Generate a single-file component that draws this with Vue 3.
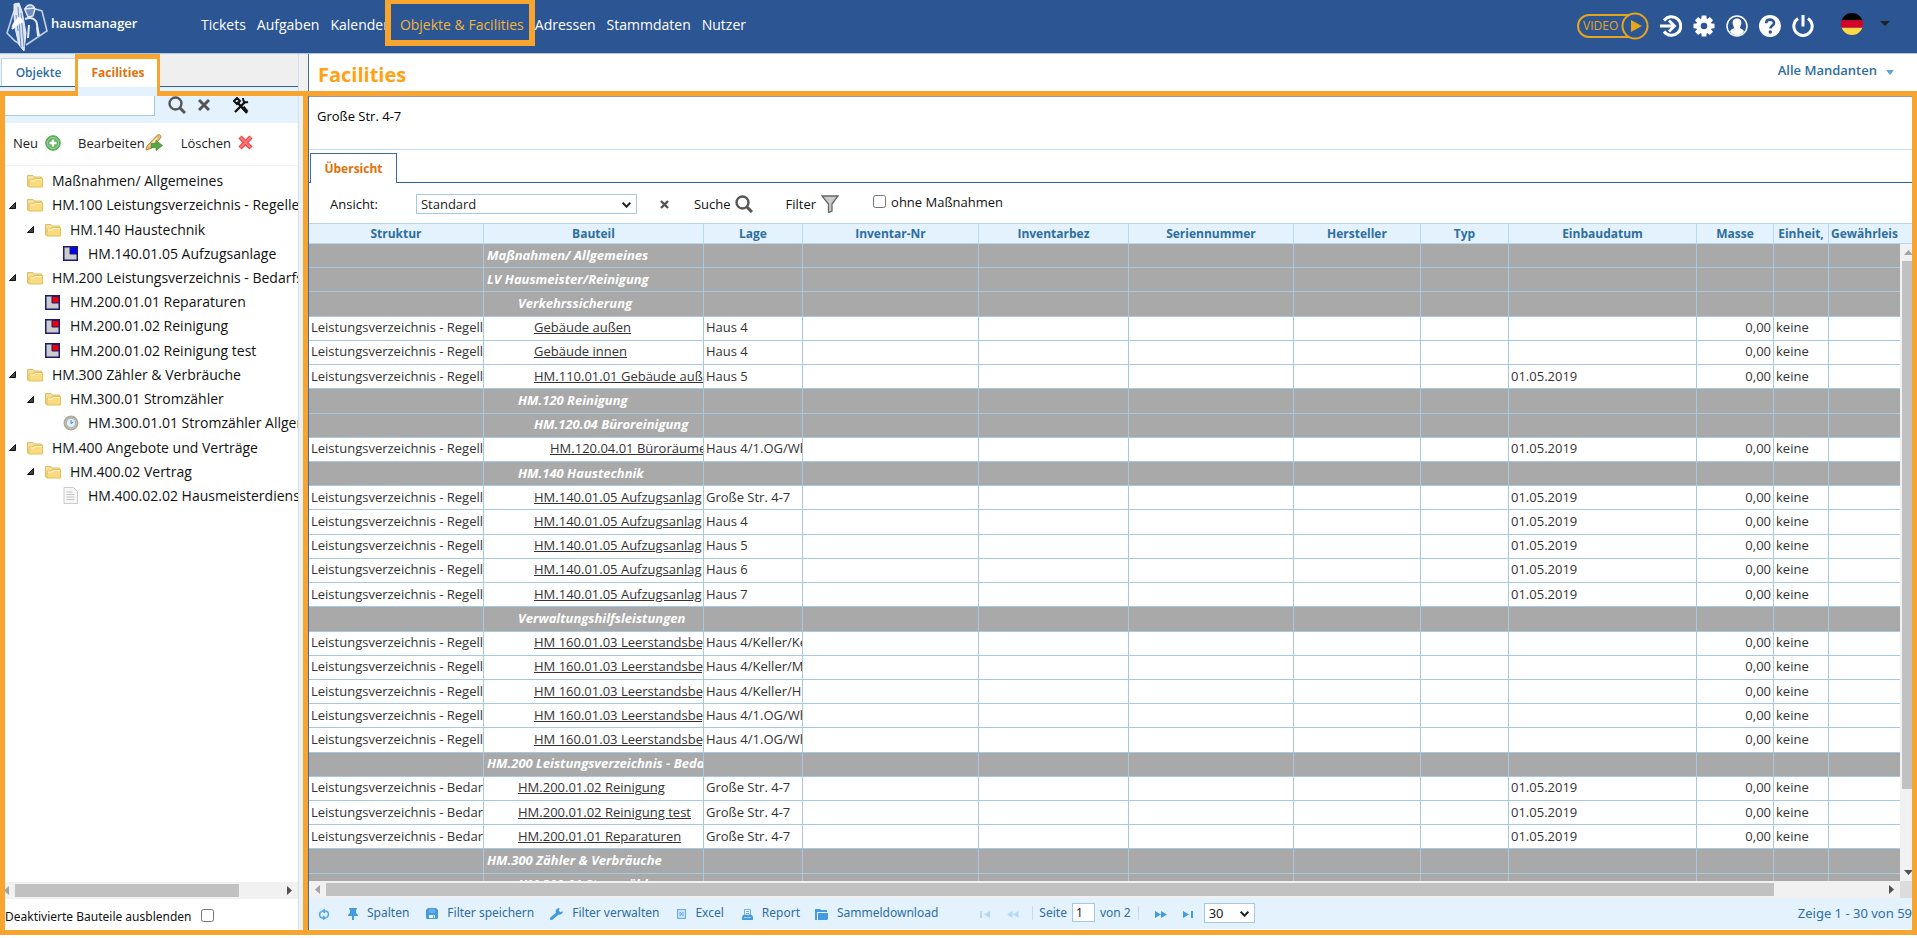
<script setup>
import { ref } from 'vue'

const nav = ['Tickets', 'Aufgaben', 'Kalender', 'Objekte & Facilities', 'Adressen', 'Stammdaten', 'Nutzer']
const active = 'Objekte & Facilities'

const tree = [
  { level: 0, icon: 'folder', label: 'Maßnahmen/ Allgemeines' },
  { level: 0, icon: 'folder', open: true, label: 'HM.100 Leistungsverzeichnis - Regelle' },
  { level: 1, icon: 'folder', open: true, label: 'HM.140 Haustechnik' },
  { level: 2, icon: 'blue', label: 'HM.140.01.05 Aufzugsanlage' },
  { level: 0, icon: 'folder', open: true, label: 'HM.200 Leistungsverzeichnis - Bedarfs' },
  { level: 1, icon: 'red', label: 'HM.200.01.01 Reparaturen' },
  { level: 1, icon: 'red', label: 'HM.200.01.02 Reinigung' },
  { level: 1, icon: 'red', label: 'HM.200.01.02 Reinigung test' },
  { level: 0, icon: 'folder', open: true, label: 'HM.300 Zähler & Verbräuche' },
  { level: 1, icon: 'folder', open: true, label: 'HM.300.01 Stromzähler' },
  { level: 2, icon: 'clock', label: 'HM.300.01.01 Stromzähler Allger' },
  { level: 0, icon: 'folder', open: true, label: 'HM.400 Angebote und Verträge' },
  { level: 1, icon: 'folder', open: true, label: 'HM.400.02 Vertrag' },
  { level: 2, icon: 'doc', label: 'HM.400.02.02 Hausmeisterdienst' },
]

const columns = ['Struktur', 'Bauteil', 'Lage', 'Inventar-Nr', 'Inventarbez', 'Seriennummer', 'Hersteller', 'Typ', 'Einbaudatum', 'Masse', 'Einheit,', 'Gewährleis']

const R = 'Leistungsverzeichnis - Regelle'
const B = 'Leistungsverzeichnis - Bedarf'
const D = '01.05.2019'
const group = (level, name) => ({ group: true, level, name })
const item = (s, level, name, place, date = '') => ({ s, level, name, place, date })

const rows = [
  group(0, 'Maßnahmen/ Allgemeines'),
  group(0, 'LV Hausmeister/Reinigung'),
  group(2, 'Verkehrssicherung'),
  item(R, 3, 'Gebäude außen', 'Haus 4'),
  item(R, 3, 'Gebäude innen', 'Haus 4'),
  item(R, 3, 'HM.110.01.01 Gebäude auße', 'Haus 5', D),
  group(2, 'HM.120 Reinigung'),
  group(3, 'HM.120.04 Büroreinigung'),
  item(R, 4, 'HM.120.04.01 Büroräume', 'Haus 4/1.OG/Wh', D),
  group(2, 'HM.140 Haustechnik'),
  item(R, 3, 'HM.140.01.05 Aufzugsanlag', 'Große Str. 4-7', D),
  item(R, 3, 'HM.140.01.05 Aufzugsanlag', 'Haus 4', D),
  item(R, 3, 'HM.140.01.05 Aufzugsanlag', 'Haus 5', D),
  item(R, 3, 'HM.140.01.05 Aufzugsanlag', 'Haus 6', D),
  item(R, 3, 'HM.140.01.05 Aufzugsanlag', 'Haus 7', D),
  group(2, 'Verwaltungshilfsleistungen'),
  item(R, 3, 'HM 160.01.03 Leerstandsbeg', 'Haus 4/Keller/Ke'),
  item(R, 3, 'HM 160.01.03 Leerstandsbeg', 'Haus 4/Keller/M'),
  item(R, 3, 'HM 160.01.03 Leerstandsbeg', 'Haus 4/Keller/H'),
  item(R, 3, 'HM 160.01.03 Leerstandsbeg', 'Haus 4/1.OG/Wh'),
  item(R, 3, 'HM 160.01.03 Leerstandsbeg', 'Haus 4/1.OG/Wh'),
  group(0, 'HM.200 Leistungsverzeichnis - Beda'),
  item(B, 2, 'HM.200.01.02 Reinigung', 'Große Str. 4-7', D),
  item(B, 2, 'HM.200.01.02 Reinigung test', 'Große Str. 4-7', D),
  item(B, 2, 'HM.200.01.01 Reparaturen', 'Große Str. 4-7', D),
  group(0, 'HM.300 Zähler & Verbräuche'),
  group(2, 'HM.300.01 Stromzähler'),
]

const search = ref('')
const page = ref('1')
const size = ref('30')
const view = ref('Standard')
</script>

<template>
  <div class="app">
    <header class="top">
      <a class="brand" href="#" aria-label="hausmanager">
        <svg width="48" height="52" viewBox="0 0 48 52" fill="none" stroke="#e6edf7">
          <path d="M14 10 7 32l8 8 5 3M32 7l10 3 5 20-21 14" stroke-width="1.600" opacity=".8" />
          <path d="M14 3l5-1 3 8 4 22-2 18-5-6-4-17-1-13z" fill="#dbe5f3" stroke-width="1" />
          <path d="M18 6l3 40M21 12l3 34M16 14l2 16" stroke="#6f8fc0" stroke-width="1" />
          <path d="M12 28c0-5 4-11 8-12l4 5c-3 0-8 4-11 7z" fill="#fff" />
          <path d="M25 9c1-6 8-7 10-1l-2 7-5 1zM24 8l11-1" stroke-width="1.400" fill="#6f8fc0" />
          <path d="M25 18c7-3 12 1 12 6l2 11M29 24l-1 13M37 26l1 9" stroke-width="2" />
        </svg>
        <span>hausmanager</span>
      </a>
      <nav>
        <a v-for="n in nav" :key="n" href="#" :class="{ on: n === active }">{{ n }}</a>
      </nav>
      <div class="tools">
        <button class="video" aria-label="Video">
          <svg width="72" height="28" viewBox="0 0 72 28" fill="none" stroke="#e8a41c" stroke-width="2">
            <path d="M52 3H12a10.500 10.500 0 0 0 0 22h40" />
            <circle cx="58" cy="14" r="12.500" fill="#2b5593" />
            <path d="M54 8v12l11-6z" fill="#e8a41c" stroke="none" />
          </svg>
          <span>VIDEO</span>
        </button>
        <button aria-label="Anmelden">
          <svg width="22" height="22" viewBox="0 0 22 22" fill="none" stroke="#fff" stroke-width="3">
            <path d="M4 5.500A9.300 9.300 0 1 1 4 16.500" /><path d="M0 11h13M9 5.500l5.500 5.500L9 16.500" stroke-width="2.800" />
          </svg>
        </button>
        <button aria-label="Einstellungen">
          <svg width="22" height="22" viewBox="0 0 22 22">
            <g fill="#fff"><circle cx="11" cy="11" r="7.800" />
              <path v-for="a in 8" :key="a" d="M8.700 0.500h4.600l.5 5H8.200z" :transform="`rotate(${a * 45} 11 11)`" /></g>
            <circle cx="11" cy="11" r="3.300" fill="#2b5593" />
          </svg>
        </button>
        <button aria-label="Profil">
          <svg width="22" height="22" viewBox="0 0 22 22">
            <circle cx="11" cy="11" r="10" fill="#2b5593" stroke="#fff" stroke-width="1.500" />
            <path d="M11 3.500c3.500 0 4.700 2.500 4.300 5.200-.3 2-1.300 2.800-1.400 4.300 1.300 1 3.600 1.200 4 3.600A9.500 9.500 0 0 1 11 20.500a9.500 9.500 0 0 1-6.900-3.900c.4-2.400 2.700-2.600 4-3.600-.1-1.500-1.100-2.300-1.400-4.300C6.300 6 7.500 3.500 11 3.500z" fill="#fff" />
          </svg>
        </button>
        <button aria-label="Hilfe">
          <svg width="22" height="22" viewBox="0 0 22 22" fill="none">
            <circle cx="11" cy="11" r="11" fill="#fff" />
            <path d="M7.200 8.300c0-5 7.800-4.700 7.800-.4 0 2.700-3.600 3-3.600 5.600" stroke="#2b5593" stroke-width="2.600" />
            <circle cx="11.300" cy="17" r="1.700" fill="#2b5593" />
          </svg>
        </button>
        <button aria-label="Abmelden">
          <svg width="22" height="22" viewBox="0 0 22 22" fill="none" stroke="#fff" stroke-width="3">
            <path d="M6 3.500a9.200 9.200 0 1 0 10 0M11 0v11.500" />
          </svg>
        </button>
        <button class="lang" aria-label="Deutsch">
          <svg width="22" height="22" viewBox="0 0 22 22">
            <clipPath id="flag"><circle cx="11" cy="11" r="11" /></clipPath>
            <g clip-path="url(#flag)"><path d="M0 0h22v7.300H0z" fill="#000" /><path d="M0 7.300h22v7.500H0z" fill="#d80027" /><path d="M0 14.800h22V22H0z" fill="#ffda44" /></g>
          </svg>
          <svg class="caret" width="10" height="5" viewBox="0 0 10 5"><path d="M0 0h10L5 5z" fill="#222" /></svg>
        </button>
      </div>
    </header>

    <div class="work">
      <aside class="side">
        <div class="tabs">
          <button class="tab">Objekte</button>
          <button class="tab current">Facilities</button>
        </div>
        <div class="searchbar">
          <input v-model="search" type="text" aria-label="Suche">
          <button class="find" aria-label="Suchen">
            <svg width="18" height="18" viewBox="0 0 18 18" fill="none" stroke="#555"><circle cx="7.500" cy="7.500" r="6" stroke-width="2.400" /><path d="M12 12l5 5" stroke-width="3" /></svg>
          </button>
          <button class="clear" aria-label="Leeren">
            <svg width="12" height="12" viewBox="0 0 12 12" stroke="#555" stroke-width="3"><path d="M1 1l10 10M11 1L1 11" /></svg>
          </button>
          <button class="config" aria-label="Werkzeuge">
            <svg width="16" height="17" viewBox="0 0 16 17" fill="none" stroke="#111"><path d="M4 5l10 11M12 5L2 15" stroke-width="2.400" /><path d="M1 4l3-3 3 3-3 3zM10 1c0 4 2 5 5 4" stroke-width="2" /><path d="M10 10l4 5" stroke-width="3.500" /></svg>
          </button>
        </div>
        <div class="actions">
          <button>Neu
            <svg width="16" height="16" viewBox="0 0 16 16"><circle cx="8" cy="8" r="7.300" fill="#63b463" stroke="#58a058" /><circle cx="8" cy="8" r="5.600" fill="none" stroke="#9bd69a" /><path d="M8 4.500v7M4.500 8h7" stroke="#fff" stroke-width="2.400" /></svg>
          </button>
          <button class="edit">Bearbeiten<svg width="18" height="17" viewBox="0 0 18 17"><path d="M2 12L12 1.500c2-2 5 0 3.500 2.500L7 14l-6 2z" fill="#e9bd6c" stroke="#bd8432" /><path d="M12 4l-7 8" stroke="#fff2d0" stroke-width="1.500" /><path d="M6 9.500h5V6.500l6.500 5-6.500 5v-3H6z" fill="#57a845" stroke="#3f8b36" stroke-width=".7" /></svg>
          </button>
          <button class="delete">Löschen
            <svg width="15" height="15" viewBox="0 0 15 15"><path d="M2 2l11 11M13 2L2 13" stroke="#e44" stroke-width="4.500" /><path d="M2.500 2.500l10 10M12.500 2.500l-10 10" stroke="#f77" stroke-width="2" /></svg>
          </button>
        </div>
        <ul class="tree">
          <li v-for="(t, i) in tree" :key="i" :class="'l' + t.level">
            <span class="twist"><svg v-if="t.open" width="7" height="7" viewBox="0 0 7 7"><path d="M6.500.5v6h-6z" fill="#444" stroke="#111" /></svg></span>
            <span class="ico">
              <svg v-if="t.icon === 'folder'" width="16" height="14" viewBox="0 0 16 14"><path d="M.5 12V1.500h5.500L7.500 3h7v9.500H1z" fill="#f5dd9b" stroke="#dfbd65" /><path d="M2 6h4l1-1.500h8.500V13H2z" fill="#f8dc80" stroke="#e6bf56" /><path d="M3 7h4l1-1.500h6.500" stroke="#fff4cc" fill="none" /></svg>
              <svg v-else-if="t.icon === 'blue' || t.icon === 'red'" width="15" height="15" viewBox="0 0 15 15"><path d="M.75.75h13.500v13.500H.75z" fill="#ccc" stroke="#1b1b70" stroke-width="1.500" /><path d="M7 1.500h7V8H7z" :fill="t.icon === 'blue' ? '#0000f0' : '#f00000'" stroke="#1b1b70" /></svg>
              <svg v-else-if="t.icon === 'clock'" width="16" height="16" viewBox="0 0 16 16"><circle cx="8" cy="8" r="6.500" fill="#e6eff8" stroke="#bba78b" stroke-width="2" /><circle cx="8" cy="8" r="4.800" fill="none" stroke="#93b4d9" stroke-width="1.200" /><path d="M8 5v3.500l2.500-1.500" fill="none" stroke="#56789d" /></svg>
              <svg v-else width="15" height="17" viewBox="0 0 15 17"><path d="M1 .5h9.500l4 4v12H1z" fill="#f6f6f6" stroke="#ccc" /><path d="M3.500 5h6M3.500 7.500h8M3.500 10h8M3.500 12.500h8" stroke="#c4c4c4" /></svg>
            </span>
            <span>{{ t.label }}</span>
          </li>
        </ul>
        <div class="hbar"><i class="arr lt" /><i class="thumb" /><i class="arr rt" /></div>
        <label class="hide">Deaktivierte Bauteile ausblenden <input type="checkbox"></label>
      </aside>

      <main>
        <div class="titlebar">
          <h1>Facilities</h1>
          <button>Alle Mandanten <svg width="8" height="5" viewBox="0 0 8 5"><path d="M0 0h8L4 5z" fill="#5fa4d3" /></svg></button>
        </div>
        <div class="address">Große Str. 4-7</div>
        <div class="subtabs"><button>Übersicht</button></div>
        <div class="toolbar">
          <label for="view">Ansicht:</label>
          <div class="pick">
            <select id="view" v-model="view"><option>Standard</option></select>
            <svg width="9" height="6" viewBox="0 0 9 6" fill="none" stroke="#222" stroke-width="2"><path d="M.7.7l3.800 4L8.300.7" /></svg>
          </div>
          <button class="x" aria-label="Ansicht löschen"><svg width="9" height="9" viewBox="0 0 9 9" stroke="#555" stroke-width="2.400"><path d="M1 1l7 7M8 1L1 8" /></svg></button>
          <button class="q">Suche <svg width="18" height="18" viewBox="0 0 18 18" fill="none" stroke="#555"><circle cx="7.500" cy="7.500" r="6" stroke-width="2.400" /><path d="M12 12l5 5" stroke-width="3" /></svg></button>
          <button class="f">Filter <svg width="18" height="18" viewBox="0 0 18 18"><path d="M1 1h16l-6 8v7l-3.500 1.500V9z" fill="#ccc" stroke="#666" stroke-width="1.300" /></svg></button>
          <label class="ohne"><input type="checkbox"> ohne Maßnahmen</label>
        </div>
        <div class="grid">
          <div class="clip">
            <table>
              <colgroup><col v-for="(c, i) in columns" :key="c" :class="'c' + i"></colgroup>
              <thead><tr><th v-for="c in columns" :key="c" scope="col">{{ c }}</th></tr></thead>
              <tbody>
                <tr v-for="(r, i) in rows" :key="i" :class="{ group: r.group }">
                  <td>{{ r.s }}</td>
                  <td :class="'n' + r.level"><template v-if="r.group">{{ r.name }}</template><a v-else href="#">{{ r.name }}</a></td>
                  <td>{{ r.place }}</td>
                  <td /><td /><td /><td /><td />
                  <td>{{ r.date }}</td>
                  <td class="num">{{ r.group ? '' : '0,00' }}</td>
                  <td>{{ r.group ? '' : 'keine' }}</td>
                  <td />
                </tr>
              </tbody>
            </table>
          </div>
          <div class="vbar"><div class="cap" /><i class="arr up" /><i class="thumb" /><i class="arr dn" /></div>
          <div class="hbar"><i class="arr lt" /><i class="thumb" /><i class="arr rt" /></div>
          <div class="corner" />
        </div>
        <footer>
          <button aria-label="Aktualisieren"><svg width="12" height="13" viewBox="0 0 12 13" fill="none" stroke="#5aa7e2" stroke-width="1.500"><path d="M7 1.500L4.500 3 7 5M5 3h2c4 0 4.500 5 1.500 6.500M5 11.500L7.500 10 5 8M7 10H5C1 10 .5 5 3.500 3.500" /></svg></button>
          <button class="b1"><svg width="10" height="12" viewBox="0 0 10 12" fill="#459be0"><path d="M1 0h8v1L8 2v3l2 2v1H0V7l2-2V2L1 1zM4 8h2v4H4z" /></svg>Spalten</button>
          <button class="b2"><svg width="12" height="12" viewBox="0 0 12 12"><path d="M2 0h8l2 2v8l-1 1H1l-1-1V2z" fill="#459be0" /><path d="M3 2h6M3 4h6" stroke="#8cc3ef" /><path d="M3 7h6v3H3z" fill="#e4f2fe" /><path d="M7 7.500h1V10H7z" fill="#459be0" /></svg>Filter speichern</button>
          <button class="b3"><svg width="13" height="12" viewBox="0 0 13 12"><path d="M1.500 10.500L7.500 5.500" stroke="#459be0" stroke-width="3" stroke-linecap="round" /><path d="M9.500 0C6.500 0 5 2.500 6 5c1 2.500 6 2.500 7-1.500l-3 .5-1-1.500z" fill="#459be0" /></svg>Filter verwalten</button>
          <button class="b4"><svg width="9" height="10" viewBox="0 0 9 10" fill="none" stroke="#6ab0e8"><path d="M.5.5h8v9h-8z" stroke-width="1.500" /><path d="M3 2.500v5M6 2.500v5M3 3l3 4M6 3L3 7" /></svg>Excel</button>
          <button class="b5"><svg width="11" height="11" viewBox="0 0 11 11"><path d="M2.500.5h6V6h-6z" fill="#fff" stroke="#6ab0e8" /><path d="M4 2.500h3M4 4.500h3" stroke="#6ab0e8" /><path d="M1 6h9l1 2v3H0V8z" fill="#459be0" /><path d="M2 8.500h7" stroke="#9fd0f5" /></svg>Report</button>
          <button class="b6"><svg width="13" height="12" viewBox="0 0 13 12" fill="#459be0"><path d="M0 12V1h5l1 1h6v2H2v8z" /><path d="M3 5h10v6l-1 1H3z" /></svg>Sammeldownload</button>
          <button class="b7" aria-label="Erste Seite"><svg width="11" height="7" viewBox="0 0 11 7" fill="#b4d8f4"><path d="M0 0h2v7H0zM10 0v7L4 3.500z" /></svg></button>
          <button class="b8" aria-label="Vorige Seite"><svg width="12" height="7" viewBox="0 0 12 7" fill="#b4d8f4"><path d="M5.500 0v7L0 3.500zM11.500 0v7L6 3.500z" /></svg></button>
          <label class="pg">Seite <input v-model="page" type="text"> von 2</label>
          <button class="b9" aria-label="Nächste Seite"><svg width="12" height="7" viewBox="0 0 12 7" fill="#459be0"><path d="M0 0v7l6-3.500zM6 0v7l6-3.500z" /></svg></button>
          <button class="b8" aria-label="Letzte Seite"><svg width="11" height="7" viewBox="0 0 11 7" fill="#459be0"><path d="M0 0v7l6-3.500zM8 0h2v7H8z" /></svg></button>
          <div class="pick small">
            <select v-model="size" aria-label="Zeilen pro Seite"><option>30</option></select>
            <svg width="9" height="6" viewBox="0 0 9 6" fill="none" stroke="#222" stroke-width="2"><path d="M.7.7l3.800 4L8.300.7" /></svg>
          </div>
          <span class="count">Zeige 1 - 30 von 59</span>
        </footer>
      </main>
      <div class="frame" />
      <div class="frame-tab" />
    </div>
  </div>
</template>

<style>
body { margin: 0; }
</style>

<style scoped>
.app { height: 100vh; display: flex; flex-direction: column; overflow: hidden; background: #fff; color: #333; font: 13px/16px "Open Sans", "Noto Sans", sans-serif; }
.app * { box-sizing: border-box; }
button, input, select { font: inherit; color: inherit; }
button { background: none; border: 0; padding: 0; display: flex; align-items: center; white-space: nowrap; }
svg { display: block; flex: none; }
a { color: inherit; text-decoration: none; }
input[type=checkbox] { width: 13px; height: 13px; margin: 0; }

.top { height: 54px; flex: none; background: #2b5593; border-bottom: 1px solid #a9c8e6; display: flex; color: #fff; }
.brand { display: flex; width: 201px; flex: none; font-size: 13px; font-weight: 600; }
.brand svg { margin-top: 1px; }
.brand span { margin: 14px 0 0 3px; line-height: 18px; }
nav { display: flex; gap: 11px; height: 53px; font-size: 14px; }
nav a { position: relative; line-height: 50px; white-space: nowrap; }
nav a.on { color: #f0b440; }
nav a.on::after { content: ""; position: absolute; inset: 0 -11px 7px -15px; border: 6px solid #f8a52f; border-top-width: 4px; }
.tools { margin-left: auto; padding: 0 27px 2px 0; display: flex; align-items: center; gap: 11px; }
.video { position: relative; }
.video span { position: absolute; left: 6px; font-size: 12px; color: #e8a41c; }
.lang { margin-left: 16px; gap: 17px; }
.lang svg { margin-bottom: 4px; }

.work { flex: 1; min-height: 0; display: flex; position: relative; padding-bottom: 8px; }
.side { width: 308px; flex: none; display: flex; flex-direction: column; padding-right: 10px; background: linear-gradient(90deg, transparent 298px, #cfe0f0 298px, #cfe0f0 299px, #f1f1f1 299px); }
.tabs { height: 33px; flex: none; background: #efefef; border-bottom: 1px solid #2f5f9e; display: flex; align-items: end; padding-left: 1px; }
.tab { height: 28px; width: 75px; justify-content: center; background: #fff; border: 1px solid #b9d7ee; border-bottom: 0; color: #2e6e9e; font-size: 12px; font-weight: 600; }
.tab.current { width: 84px; height: 32px; padding-top: 3px; color: #e17009; border: 0; margin-bottom: -1px; font-weight: 700; }
.searchbar { height: 36px; flex: none; background: #e4f2fe; display: flex; align-items: center; padding-left: 4px; }
.searchbar input { width: 151px; height: 21px; border: 1px solid #a6c9e2; background: #fff; }
.find { margin-left: 13px; } .clear { margin-left: 12px; } .config { margin-left: 23px; }
.actions { height: 43px; flex: none; display: flex; align-items: center; padding: 0 0 3px 13px; border-bottom: 1px solid #f2f5f8; color: #222; }
.actions button { gap: 7px; }
.actions .edit { margin-left: 17px; gap: 0; } .actions .delete { margin-left: 18px; }
.tree { list-style: none; margin: 3px 0 0; padding: 0; height: 339px; display: flex; flex-direction: column; overflow: hidden; font-size: 14px; color: #111; }
.tree li { flex: 1; display: flex; align-items: center; white-space: nowrap; padding-left: 9px; }
.tree li.l1 { padding-left: 27px; } .tree li.l2 { padding-left: 45px; }
.twist { width: 18px; flex: none; } .ico { width: 25px; flex: none; }
.side .hbar { margin-top: auto; margin-left: 4px; }
.side .hbar .thumb { width: 224px; }
.hide { height: 31px; flex: none; display: flex; align-items: center; gap: 10px; padding: 4px 0 0 5px; white-space: nowrap; font: 12px/16px "Noto Sans", sans-serif; color: #111; }
.hide input { margin-bottom: 2px; }

.hbar { height: 17px; flex: none; display: flex; align-items: center; background: #f1f1f1; overflow: hidden; }
.thumb { display: block; background: #c1c1c1; }
.hbar .thumb { height: 13px; }
.arr { display: block; flex: none; width: 17px; height: 17px; position: relative; }
.arr::after { content: ""; position: absolute; inset: 4px 6px; background: #505050; }
.lt::after { clip-path: polygon(0 50%, 100% 0, 100% 100%); background: #a3a3a3; }
.rt { margin-left: auto; }
.rt::after { clip-path: polygon(0 0, 100% 50%, 0 100%); }
.side .lt { width: 11px; } .side .lt::after { inset: 4px 6px 4px 0; }

main { flex: 1; min-width: 0; display: flex; flex-direction: column; border-left: 1px solid #3f6aa5; padding-right: 5px; }
.titlebar { height: 42px; flex: none; display: flex; justify-content: space-between; padding: 0 18px 4px 9px; }
h1 { margin: 0; font-size: 20px; line-height: 42px; font-weight: 700; color: #ffa211; }
.titlebar button { font-weight: 600; color: #2e6e9e; gap: 9px; padding-bottom: 6px; }
.titlebar svg { margin-top: 4px; }
.address { height: 54px; flex: none; border-top: 1px solid #999; border-bottom: 1px solid #c5dcee; padding: 11px 8px; color: #000; }
.subtabs { height: 33px; flex: none; border-bottom: 1px solid #2f5f9e; display: flex; align-items: end; padding-left: 1px; }
.subtabs button { width: 87px; height: 30px; justify-content: center; border: 1px solid #3f6aa5; border-bottom: 0; margin-bottom: -1px; background: #fff; color: #e17009; font-size: 12px; font-weight: 700; }
.toolbar { height: 40px; flex: none; display: flex; align-items: center; padding: 2px 0 0 21px; color: #111; }
.pick { position: relative; margin-left: 38px; width: 221px; }
.pick select { width: 100%; height: 20px; padding: 0 4px; border: 1px solid #a6c9e2; background: #fff; appearance: none; border-radius: 0; color: #222; }
.pick svg { position: absolute; right: 6px; top: 8px; pointer-events: none; }
.x { margin-left: 23px; } .q { margin-left: 25px; gap: 4px; } .f { margin-left: 33px; gap: 5px; }
.ohne { display: flex; align-items: center; gap: 5px; margin: 0 0 5px 34px; white-space: nowrap; }

.grid { flex: 1; min-height: 0; display: grid; grid-template: minmax(0, 1fr) 17px / minmax(0, 1fr) 12px; }
.clip { overflow: hidden; border-top: 1px solid #b9d7ee; }
table { width: 100%; height: 674px; table-layout: fixed; border-collapse: separate; border-spacing: 0; }
th { height: 20px; padding: 0; background: #e4f2fe; color: #2e6e9e; font-size: 12px; font-weight: 700; line-height: 14px; border-right: 1px solid #b9d7ee; border-bottom: 1px solid #b9d7ee; white-space: nowrap; overflow: hidden; }
td { height: 24px; padding: 0 2px 2px; line-height: 16px; border-right: 1px solid #a6c9e2; border-bottom: 1px solid #a6c9e2; white-space: nowrap; overflow: hidden; }
th:last-child, td:last-child { border-right: 0; }
td a { text-decoration: underline; }
.num { text-align: right; }
.group td { background: #a9a9a9; color: #fff; font-weight: 700; font-style: italic; }
td.n0 { padding-left: 3px; } td.n2 { padding-left: 34px; } td.n3 { padding-left: 50px; } td.n4 { padding-left: 66px; }
.c0 { width: 175px; } .c1 { width: 220px; } .c2 { width: 99px; } .c3 { width: 176px; } .c4 { width: 150px; } .c5 { width: 165px; }
.c6 { width: 127px; } .c7 { width: 88px; } .c8 { width: 188px; } .c9 { width: 77px; } .c10 { width: 55px; }
.vbar { background: #f1f1f1; display: flex; flex-direction: column; overflow: hidden; }
.cap { height: 21px; background: #e4f2fe; border: solid #b9d7ee; border-width: 1px 0; }
.vbar .thumb { height: 528px; margin-left: 2px; }
.vbar .arr::after { inset: 6px 4px; }
.up::after { clip-path: polygon(50% 0, 100% 100%, 0 100%); background: #a3a3a3 !important; }
.dn { margin-top: auto; }
.dn::after { clip-path: polygon(0 0, 100% 0, 50% 100%); }
.grid .hbar .thumb { width: 91%; flex: none; }
.corner { background: #dcdcdc; }

footer { height: 32px; flex: none; background: #e4f2fe; border-bottom: 1px solid #fff; display: flex; align-items: center; padding: 0 0 2px 9px; color: #2e6e9e; white-space: nowrap; font: 12px/16px "Noto Sans", sans-serif; }
footer button { gap: 9px; }
footer button svg { margin-top: 3px; }
.b1 { margin-left: 18px; } .b2 { margin-left: 17px; } .b3 { margin-left: 16px; } .b4 { margin-left: 18px; }
.b5 { margin-left: 18px; } .b6 { margin-left: 15px; }
.b7 { margin-left: 42px; } .b8 { margin-left: 16px; } .b9 { margin-left: 16px; }
.pg { display: flex; align-items: center; gap: 5px; margin-left: 13px; padding: 0 7px 0 6px; border: solid #c9dbea; border-width: 0 1px; line-height: 14px; }
.pg input { width: 23px; height: 19px; padding: 0 3px; border: 1px solid #a6c9e2; background: #fff; color: #222; margin: -3px 0; }
.pick.small { width: 51px; margin-left: 10px; font-size: 13px; }
.count { margin-left: auto; font-size: 13px; }

.frame { position: absolute; inset: 37px 0 3px; border: 5px solid #f8a52f; pointer-events: none; }
.frame::after { content: ""; position: absolute; left: 298px; top: 0; bottom: 0; width: 5px; background: #f8a52f; }
.frame-tab { position: absolute; left: 75px; top: 0; width: 85px; height: 42px; border: solid #f8a52f; border-width: 5px 3px 0; pointer-events: none; }
.frame-tab::after { content: ""; position: absolute; inset: 32px 0 0; background: #e4f2fe; }
</style>
